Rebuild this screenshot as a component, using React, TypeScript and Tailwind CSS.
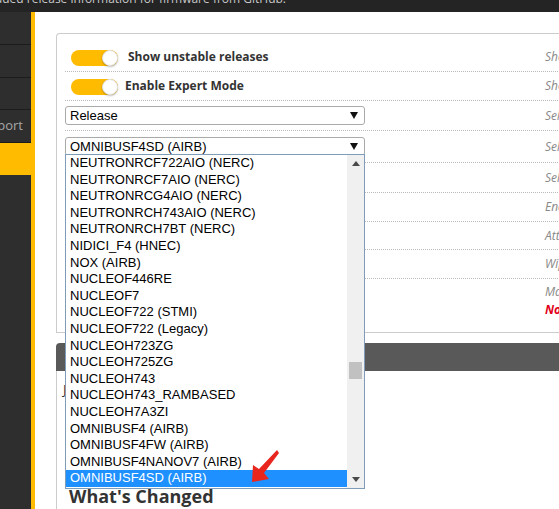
import React from "react";

const BOARDS = [
  "NEUTRONRCF722AIO (NERC)",
  "NEUTRONRCF7AIO (NERC)",
  "NEUTRONRCG4AIO (NERC)",
  "NEUTRONRCH743AIO (NERC)",
  "NEUTRONRCH7BT (NERC)",
  "NIDICI_F4 (HNEC)",
  "NOX (AIRB)",
  "NUCLEOF446RE",
  "NUCLEOF7",
  "NUCLEOF722 (STMI)",
  "NUCLEOF722 (Legacy)",
  "NUCLEOH723ZG",
  "NUCLEOH725ZG",
  "NUCLEOH743",
  "NUCLEOH743_RAMBASED",
  "NUCLEOH7A3ZI",
  "OMNIBUSF4 (AIRB)",
  "OMNIBUSF4FW (AIRB)",
  "OMNIBUSF4NANOV7 (AIRB)",
  "OMNIBUSF4SD (AIRB)",
];

const SELECTED = "OMNIBUSF4SD (AIRB)";

function Toggle() {
  return (
    <div className="w-[47px] h-[16px] rounded-full bg-[#ffbb00] flex justify-end shrink-0">
      <div className="w-[16px] h-[16px] rounded-full bg-white border border-[#e2e2e2] shadow-[0_1px_2px_rgba(0,0,0,0.25)]" />
    </div>
  );
}

function Caret({ up = false }: { up?: boolean }) {
  return (
    <svg width="8" height="5" viewBox="0 0 8 5" className="shrink-0">
      <polygon points={up ? "0,5 8,5 4,0" : "0,0 8,0 4,5"} fill="#4a4a4a" />
    </svg>
  );
}

function Select({ value }: { value: string }) {
  return (
    <div className="w-[300px] h-[19px] border border-[#aaa] rounded-[3px] bg-white flex items-center justify-between pl-[4px] pr-[6px] font-['Liberation_Sans',Arial,sans-serif] text-[13px] text-black">
      <span className="leading-[17px]">{value}</span>
      <svg width="8" height="7" viewBox="0 0 8 7">
        <polygon points="0,0 8,0 4,7" fill="#111" />
      </svg>
    </div>
  );
}

function Row({
  h,
  children,
  note,
}: {
  h: string;
  children?: React.ReactNode;
  note: React.ReactNode;
}) {
  return (
    <div className={`flex items-center ${h} border-b border-dotted border-[#bbb]`}>
      <div className="w-[480px] shrink-0 flex items-center">{children}</div>
      <div className="text-[12px] italic text-[#888] whitespace-nowrap">{note}</div>
    </div>
  );
}

function Sidebar() {
  return (
    <aside className="w-[35px] shrink-0 bg-[#2e2e2e] border-r-[4px] border-[#ffbb00] flex flex-col">
      <div className="h-[33px] border-b border-[#1c1c1c]" />
      <div className="h-[33px] border-b border-[#1c1c1c]" />
      <div className="h-[32px] border-b border-[#1c1c1c]" />
      <div className="h-[33px] border-b border-[#1c1c1c] flex items-center justify-end pr-[8px] overflow-hidden whitespace-nowrap text-[13px] text-[#a8a8a8]">
        Documentation &amp; Support
      </div>
      <div className="h-[32px] bg-[#ffbb00]" />
    </aside>
  );
}

function BoardList() {
  return (
    <div className="absolute left-[65px] top-[154px] w-[300px] h-[335px] border border-[#7f9db9] bg-white flex font-['Liberation_Sans',Arial,sans-serif] text-[13px]">
      <ul className="flex-1 flex flex-col">
        {BOARDS.map((b) => (
          <li
            key={b}
            className={`h-[16.6px] leading-[16.6px] pl-[4px] whitespace-nowrap ${
              b === SELECTED ? "bg-[#1e90ff] text-white" : "text-black"
            }`}
          >
            {b}
          </li>
        ))}
      </ul>
      <div className="w-[17px] bg-[#f0f0f0] flex flex-col">
        <div className="h-[17px] flex items-center justify-center">
          <Caret up />
        </div>
        <div className="flex-1 flex justify-center">
          <div className="w-[13px] h-[17px] mt-[190px] bg-[#c1c1c1]" />
        </div>
        <div className="h-[17px] flex items-center justify-center">
          <Caret />
        </div>
      </div>
    </div>
  );
}

export default function App() {
  return (
    <div className="relative w-[559px] h-[509px] overflow-hidden bg-white font-['Open_Sans',sans-serif] text-[#333]">
      {/* status bar */}
      <div className="h-[12px] bg-[#242424] overflow-hidden">
        <div className="w-[286px] flex justify-end overflow-hidden whitespace-nowrap text-[12px] leading-[16px] mt-[-9px] text-[#c8c8c8]">
          Loaded release information for firmware from GitHub.
        </div>
      </div>

      <div className="flex h-[497px]">
        <Sidebar />

        <main className="flex-1 pl-[21px] pt-[21px] flex flex-col">
          {/* options panel */}
          <div className="w-[560px] h-[300px] border border-r-0 border-[#ccc] rounded-tl-[4px] pl-[8px] pt-[9px]">
            <Row h="h-[29px]" note="Show Release-Candidates and Development Releases.">
              <div className="ml-[6px] mt-[1px]">
                <Toggle />
              </div>
              <span className="ml-[10px] text-[12px] font-bold">Show unstable releases</span>
            </Row>
            <Row h="h-[29px]" note="Shows additional firmware options.">
              <div className="ml-[6px] mt-[1px]">
                <Toggle />
              </div>
              <span className="ml-[7px] text-[12px] font-bold">Enable Expert Mode</span>
            </Row>
            <Row h="h-[30px]" note="Select the type of firmware.">
              <Select value="Release" />
            </Row>
            <Row h="h-[32px]" note="Select your board.">
              <div className="-mt-[1px]">
                <Select value={SELECTED} />
              </div>
            </Row>
            <Row h="h-[30px]" note="Select firmware version for your board.">
              <span className="text-[12px] font-bold">No reboot sequence</span>
            </Row>
            <Row h="h-[29px]" note="Enable if you powered your FC without using USB.">
              <span className="text-[12px] font-bold">Flash on connect</span>
            </Row>
            <Row h="h-[28px]" note="Attempts to flash the board on connect.">
              <span className="text-[12px] font-bold">Full chip erase</span>
            </Row>
            <Row h="h-[29px]" note="Wipes all configuration data.">
              <span className="text-[12px] font-bold">Manual baud rate</span>
            </Row>
            <div className="flex pt-[4px]">
              <div className="w-[480px] shrink-0" />
              <div className="text-[12px] italic leading-[18px] whitespace-nowrap">
                <div className="text-[#888]">Manual selection of baud rate.</div>
                <div className="text-[#e2001a] font-bold">Not recommended for normal use.</div>
              </div>
            </div>
          </div>

          {/* release notes */}
          <div className="mt-[10px] w-[560px] flex-1 flex flex-col">
            <div className="h-[28px] bg-[#595959] rounded-tl-[4px]" />
            <div className="flex-1 border-l border-[#ccc] pl-[6px] pt-[8px]">
              <div className="h-[106px] text-[13px] leading-[20px] text-[#333]">
                <div>Jan 2024 release notes</div>
                <div className="text-[#7a1f1f]">| Version 4.5.0</div>
                <div className="text-[#7a1f1f]">| Maintenance release</div>
                <div className="text-[#7a1f1f]">| Firmware targets</div>
              </div>
              <h2 className="text-[18px] leading-[22px] font-bold text-[#333] pl-[6px]">What's Changed</h2>
            </div>
          </div>
        </main>
      </div>

      <BoardList />

      {/* red arrow annotation */}
      <svg
        className="absolute left-[244px] top-[446px]"
        width="40"
        height="40"
        viewBox="0 0 40 40"
      >
        <polygon
          points="8,36 9,19 15,23 33,4 35,7 20,27 25,33"
          fill="#e8261e"
        />
      </svg>
    </div>
  );
}
